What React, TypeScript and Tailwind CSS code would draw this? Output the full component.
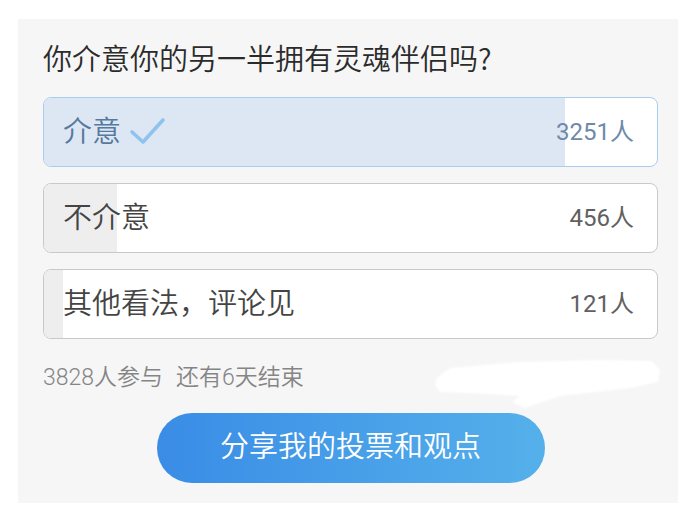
import React from "react";

type Option = {
  label: string;
  count: number;
  picked?: boolean;
};

const options: Option[] = [
  { label: "介意", count: 3251, picked: true },
  { label: "不介意", count: 456 },
  { label: "其他看法，评论见", count: 121 },
];

const total = 3828;

const Check: React.FC = () => (
  <svg width="38" height="32" viewBox="0 0 38 32" className="ml-[8px] shrink-0">
    <path
      d="M3 16 L14 26 L34 4"
      fill="none"
      stroke="#8fc3ef"
      strokeWidth="3.6"
      strokeLinecap="round"
      strokeLinejoin="round"
    />
  </svg>
);

const OptionRow: React.FC<{ opt: Option }> = ({ opt }) => {
  const pct = (opt.count / total) * 100;
  return (
    <div
      className={
        opt.picked
          ? "relative h-[70px] rounded-[8px] border border-[#a9cdee] bg-white overflow-hidden"
          : "relative h-[70px] rounded-[8px] border border-[#c9c9c9] bg-white overflow-hidden"
      }
    >
      <div
        className={opt.picked ? "absolute inset-y-0 left-0 bg-[#dce7f3]" : "absolute inset-y-0 left-0 bg-[#eeeeee]"}
        style={{ width: `${pct}%` }}
      />
      <div className="relative flex h-full items-center justify-between pl-[19px] pr-[23px]">
        <div className="flex items-center">
          <span className={opt.picked ? "text-[29px] leading-[40px] text-[#56799f]" : "text-[29px] leading-[40px] text-[#444444]"}>
            {opt.label}
          </span>
          {opt.picked && <Check />}
        </div>
        <span className={opt.picked ? "text-[24px] font-normal text-[#6d8aab]" : "text-[24px] font-normal text-[#606060]"}>
          {opt.count}人
        </span>
      </div>
    </div>
  );
};

export default function App() {
  return (
    <div
      className="w-[700px] h-[514px] bg-white pt-[19px] pl-[18px] font-[350]"
      style={{ fontFamily: 'Roboto, "Noto Sans CJK SC", sans-serif' }}
    >
      <div className="relative w-[660px] h-[484px] bg-[#f6f6f6] pt-[18px] pl-[25px] pr-[20px]">
        <h1 className="font-['Noto_Sans_CJK_SC',sans-serif] text-[29px] leading-[40px] text-[#2b2b2b] mb-[20px]">
          你介意你的另一半拥有灵魂伴侣吗?
        </h1>
        <div className="flex flex-col gap-[16px]">
          {options.map((o) => (
            <OptionRow key={o.label} opt={o} />
          ))}
        </div>
        <div className="mt-[24px] flex gap-[13px] text-[23px] leading-[30px] text-[#858585]">
          <span>3828人参与</span>
          <span>还有6天结束</span>
        </div>
        <div className="mt-[20px] flex justify-center">
          <button className="w-[388px] h-[70px] rounded-full bg-gradient-to-r from-[#3a8ce6] to-[#55b0ea] text-[29px] text-white">
            分享我的投票和观点
          </button>
        </div>
        <svg
          width="250"
          height="60"
          viewBox="0 0 250 60"
          className="absolute left-[415px] top-[338px] blur-[1px]"
        >
          <path
            d="M4 21 L17 11 L87 5 L167 3 L219 4 L227 13 L225 25 L197 31 L127 39 L92 51 L79 45 L87 39 L37 36 L7 35 L2 28 Z"
            fill="#ffffff"
          />
        </svg>
      </div>
    </div>
  );
}
